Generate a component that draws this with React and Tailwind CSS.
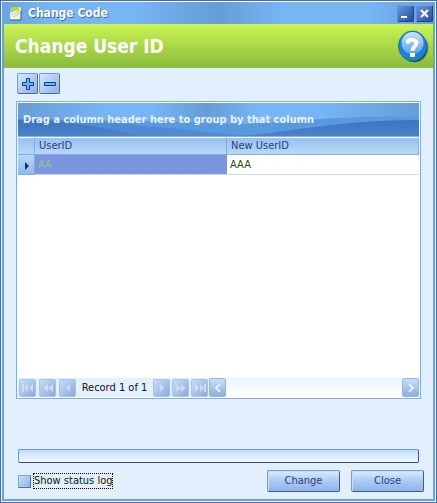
const navBtn =
    'flex h-[18px] w-[17px] shrink-0 items-center justify-center rounded-xs border border-[#a3c3ea] bg-linear-to-br from-[#c3dffb] to-[#8ba9da] text-[#d6d8ee]';
const dialogBtn =
    'h-[22px] w-[73px] rounded-xs border border-t-[#6fa0e0] border-l-[#6fa0e0] border-r-[#3559ab] border-b-[#3559ab] bg-linear-to-b from-[#d9ecff] via-[#a9cbf3] to-[#90b3e4] text-[11px] leading-4 text-[#1f3f92] shadow-[inset_1px_1px_0_#c4e0fc]';
const toolBtn =
    'flex h-[21px] w-[21px] items-center justify-center rounded-xs border border-t-[#6f9dda] border-l-[#6f9dda] border-r-[#4268b4] border-b-[#4268b4] bg-linear-to-br from-[#d3e8ff] to-[#8fb1e4]';
const captionBtn =
    'flex h-[17px] w-[17px] items-center justify-center rounded-xs border border-t-[#6fa2e2] border-l-[#5c8fd4] border-r-[#20408c] border-b-[#20408c] bg-linear-to-br from-[#639be0] to-[#2b4a9b]';

const navIcons = {
    first: 'M2 4h2v8h-2zM8 4v8l-4-4zM13 4v8l-4-4z',
    prevPage: 'M8 4v8l-5-4zM13 4v8l-5-4z',
    prev: 'M10 4v8l-4-4z',
    next: 'M6 4v8l4-4z',
    nextPage: 'M3 4v8l5-4zM8 4v8l5-4z',
    last: 'M3 4v8l4-4zM8 4v8l4-4zM12 4h2v8h-2z',
};

function NavButton({ icon, label }) {
    return (
        <button type="button" aria-label={label} className={navBtn}>
            <svg viewBox="0 0 16 16" className="h-4 w-4 shrink-0" fill="currentColor">
                <path d={navIcons[icon]} />
            </svg>
        </button>
    );
}

function ScrollButton({ label, d }) {
    return (
        <button
            type="button"
            aria-label={label}
            className="flex h-[19px] w-[17px] shrink-0 items-center justify-center rounded-xs border border-[#93b6e6] bg-linear-to-b from-[#c4e0fb] to-[#8facdd]"
        >
            <svg viewBox="0 0 10 10" className="h-2.5 w-2.5" fill="none" stroke="#e2effd" strokeWidth="2">
                <path d={d} />
            </svg>
        </button>
    );
}

function TitleBar() {
    return (
        <div className="flex h-[22px] items-center bg-[linear-gradient(90deg,#6ba4e2,#77b5f3_12%,#77b5f3_30%,#659dd8_50%,#77b5f3_65%,#77b5f3_84%,#699fdc)] pr-0.5 pl-1.5">
            <svg viewBox="0 0 14 16" className="h-4 w-3.5 shrink-0">
                <path d="M3 2h9l1 2v11h-11z" fill="#eef5d6" />
                <path d="M3 2h8l1 4-9 4z" fill="#b4dd36" />
                <path d="M11 2l2 3h-2z" fill="#f4f8ea" />
                <path d="M2 8l8-3 2 5-9 4z" fill="#f7faf4" />
                <path d="M3 10l7-3M5 12l6-3M9 6l2 3" stroke="#b7c9ad" fill="none" />
                <path d="M2 15h11v-9" stroke="#47586c" fill="none" />
            </svg>
            <span className="ml-1.5 grow text-[12px] leading-4 font-bold text-white [text-shadow:1px_1px_0_#3f6cae]">
                Change Code
            </span>
            <div className="flex gap-0.5">
                <button type="button" aria-label="Minimize" className={captionBtn}>
                    <svg viewBox="0 0 15 15" className="h-[15px] w-[15px] shrink-0">
                        <path d="M3 10h6v2h-6z" fill="#fff" />
                    </svg>
                </button>
                <button type="button" aria-label="Close window" className={captionBtn}>
                    <svg viewBox="0 0 15 15" className="h-[15px] w-[15px] shrink-0">
                        <path d="M4 4l7 7M11 4l-7 7" stroke="#fff" strokeWidth="2.2" />
                    </svg>
                </button>
            </div>
        </div>
    );
}

function Header() {
    return (
        <header className="flex h-11 items-center justify-between bg-linear-to-b from-[#caf454] to-[#8abb3c] pr-1 pl-[11px]">
            <h1 className="text-[19px] leading-6 font-bold text-white">Change User ID</h1>
            <button type="button" aria-label="Help">
                <svg viewBox="0 0 32 34" className="h-[34px] w-8">
                    <defs>
                        <linearGradient id="gloss" x1="0" y1="0" x2="0" y2="1">
                            <stop offset="0" stopColor="#cbdff9" />
                            <stop offset="1" stopColor="#5ba3ec" />
                        </linearGradient>
                    </defs>
                    <ellipse cx="18" cy="19" rx="13.500" ry="14.500" fill="#7f9f34" />
                    <ellipse cx="17" cy="18.500" rx="13.500" ry="14.500" fill="#23432f" />
                    <ellipse cx="15.500" cy="17" rx="14" ry="15" fill="#1a82dc" stroke="#1673c4" />
                    <ellipse cx="15.500" cy="14" rx="11" ry="11" fill="url(#gloss)" />
                    <path
                        d="M11 14.500V12C13 10.500 19.500 10.500 19.500 14C19.500 17.500 15.500 17 15.500 22"
                        fill="none"
                        stroke="#fff"
                        strokeWidth="4"
                    />
                    <path d="M13 24h5v4h-5z" fill="#fff" />
                </svg>
            </button>
        </header>
    );
}

function GroupPanel() {
    return (
        <div className="relative h-[33px] bg-[linear-gradient(90deg,#659dd8,#77b5f3_22%,#77b5f3_34%,#659dd8_47%,#77b5f3_60%,#77b5f3_75%,#659dd8)]">
            {/* Wave backdrop */}
            <svg viewBox="0 0 402 33" preserveAspectRatio="none" className="absolute inset-0 h-full w-full">
                <defs>
                    <linearGradient id="wave" x1="0" y1="0" x2="0" y2="1">
                        <stop offset="0" stopColor="#3c73c2" />
                        <stop offset="1" stopColor="#4b84ca" />
                    </linearGradient>
                </defs>
                <path d="M60 17C120 17 180 20 230 21C290 17 330 13 402 14V33H60z" fill="#5899e0" />
                <path d="M0 16C60 16 110 21 150 25C180 28 210 31 230 33H0z" fill="#4e8bd3" />
                <path d="M0 17C50 17 90 26 125 33H0z" fill="url(#wave)" />
                <path d="M220 33C270 30 320 17 402 17V33z" fill="url(#wave)" />
            </svg>
            <p className="relative pl-[5px] text-[11px] leading-[34px] font-bold text-[#e6f2ff]">
                Drag a column header here to group by that column
            </p>
        </div>
    );
}

function DataTable() {
    const th =
        'h-[18px] border-t border-r border-t-white border-r-[#86abdf] border-b border-b-[#86abdf] bg-linear-to-b from-[#97c1ee] to-[#b9d7f6] p-0 pl-1 text-left font-normal text-[#1e3d92]';

    return (
        <table className="w-full table-fixed border-separate border-spacing-0 border-t border-[#86abdf] text-[11px] leading-4">
            <colgroup>
                <col className="w-[17px]" />
                <col className="w-48" />
                <col />
            </colgroup>
            <thead>
                <tr>
                    <th className={th} aria-label="Row indicator" />
                    <th className={th}>UserID</th>
                    <th className={th}>New UserID</th>
                </tr>
            </thead>
            <tbody>
                <tr className="h-5">
                    <td className="border-r border-b border-[#86abdf] bg-linear-to-b from-[#b9d7f6] to-[#91baeb] p-0">
                        <svg viewBox="0 0 16 10" className="h-2.5 w-4">
                            <path d="M7 2v8l4-4z" fill="#1b2d72" />
                        </svg>
                    </td>
                    <td className="border-b border-[#c8d9f2] bg-[#7b96df] p-0 pl-[3px] text-[#91c491]">AA</td>
                    <td className="border-b border-[#cbdcf3] bg-white p-0 pl-[3px] text-[#234a23]">AAA</td>
                </tr>
            </tbody>
        </table>
    );
}

function Navigator() {
    return (
        <div className="flex h-[19px] items-center bg-linear-to-b from-[#e9f5ff] to-white">
            <div className="flex h-full items-center bg-[#e3f0fe] pr-px pl-px">
                <div className="flex gap-[3px]">
                    <NavButton icon="first" label="First record" />
                    <NavButton icon="prevPage" label="Previous page" />
                    <NavButton icon="prev" label="Previous record" />
                </div>
                <span className="w-[77px] text-center text-[11px] leading-4 whitespace-nowrap text-[#10141c]">
                    Record 1 of 1
                </span>
                <div className="flex gap-0.5">
                    <NavButton icon="next" label="Next record" />
                    <NavButton icon="nextPage" label="Next page" />
                    <NavButton icon="last" label="Last record" />
                </div>
            </div>
            <div className="flex grow justify-between">
                <ScrollButton label="Scroll left" d="M7 1L3 5l4 4" />
                <ScrollButton label="Scroll right" d="M3 1l4 4-4 4" />
            </div>
        </div>
    );
}

export default function App() {
    return (
        <div className="flex min-h-screen flex-col border border-[#466bb5] bg-white p-px font-['DejaVu_Sans_Condensed','DejaVu_Sans',sans-serif]">
            <div className="flex grow flex-col bg-[#6ba1de]">
                <TitleBar />
                <div className="mx-0.5 mb-0.5 flex grow flex-col bg-[#e2f0fe]">
                    <Header />

                    {/* Toolbar */}
                    <div className="flex gap-px px-[13px] pt-[5px]">
                        <button type="button" aria-label="Add row" className={toolBtn}>
                            <svg viewBox="0 0 15 15" className="h-[15px] w-[15px] shrink-0">
                                <path
                                    d="M6.500 2.500h3v4h4v3h-4v4h-3v-4h-4v-3h4z"
                                    fill="#62baff"
                                    stroke="#123b7d"
                                />
                            </svg>
                        </button>
                        <button type="button" aria-label="Remove row" className={toolBtn}>
                            <svg viewBox="0 0 15 15" className="h-[15px] w-[15px] shrink-0">
                                <path d="M2.500 6.500h11v3h-11z" fill="#62baff" stroke="#123b7d" />
                            </svg>
                        </button>
                    </div>

                    {/* Grid */}
                    <div className="mx-3 mt-[7px] flex grow flex-col border border-[#86abdf] bg-white p-px">
                        <GroupPanel />
                        <DataTable />
                        <div className="grow" />
                        <Navigator />
                    </div>

                    <div
                        role="progressbar"
                        aria-label="Progress"
                        aria-valuenow={0}
                        className="mx-3.5 mt-[50px] h-3.5 rounded-xs border border-t-[#679bdc] border-l-[#679bdc] border-r-[#3559ab] border-b-[#2c4b9c] bg-linear-to-b from-[#c2dcfb] to-[#f4faff]"
                    />

                    {/* Footer */}
                    <div className="flex items-center pt-[7px] pr-[9px] pb-[7px] pl-3.5">
                        <label className="flex items-center gap-0.5 text-[11px] leading-[14px] text-[#10141c]">
                            <input
                                type="checkbox"
                                className="h-[13px] w-[13px] appearance-none border border-t-[#7aaae4] border-l-[#7aaae4] border-r-[#4770bc] border-b-[#4770bc] bg-linear-to-br from-[#c4e0fc] to-[#8fb3e5] checked:bg-[#3559ab]"
                            />
                            <span className="border border-dotted border-black whitespace-nowrap">Show status log</span>
                        </label>
                        <div className="ml-auto flex gap-[11px]">
                            <button type="button" className={dialogBtn}>Change</button>
                            <button type="button" className={dialogBtn}>Close</button>
                        </div>
                    </div>
                </div>
            </div>
        </div>
    );
}
